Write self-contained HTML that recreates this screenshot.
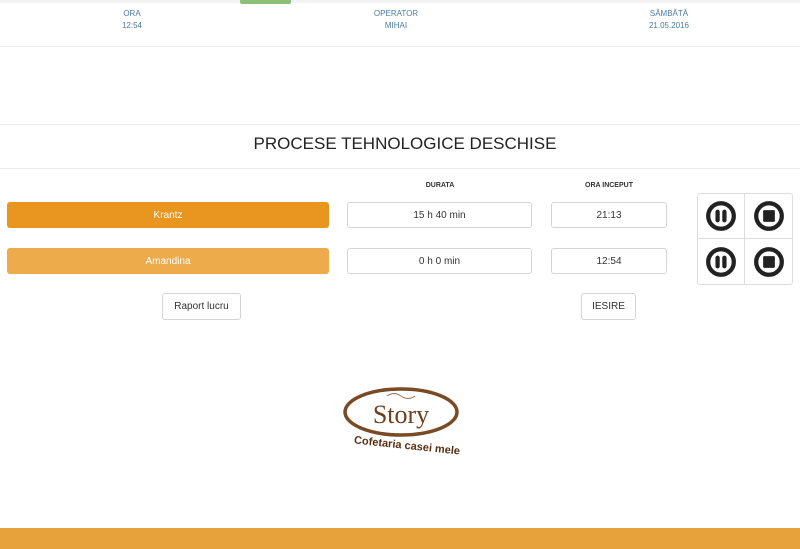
<!DOCTYPE html>
<html><head><meta charset="utf-8"><style>
*{margin:0;padding:0;box-sizing:border-box}
body{width:800px;height:549px;background:#fff;font-family:"Liberation Sans",sans-serif;position:relative;overflow:hidden}
.a{position:absolute}
.hd{font-size:8px;color:#4a7ba8;text-align:center;line-height:12px}
.box{position:absolute;border:1px solid #d5d5d5;border-radius:3px;background:#fff;font-size:10px;color:#333;display:flex;align-items:center;justify-content:center}
.ob{position:absolute;border-radius:3px;color:#fff;font-size:10px;display:flex;align-items:center;justify-content:center}
.cell{position:absolute;border:1px solid #ddd;display:flex;align-items:center;justify-content:center;background:#fff}
</style></head><body>
<div class="a" style="left:0;top:0;width:800px;height:3px;background:#f3f3f3"></div>
<div class="a" style="left:0;top:46px;width:800px;height:1px;background:#f0f0f0"></div>
<div class="a" style="left:240px;top:0;width:51px;height:4px;background:#8cc07a;border-radius:0 0 2px 2px"></div>
<div class="a hd" style="left:100px;top:8px;width:64px">ORA<br>12:54</div>
<div class="a hd" style="left:356px;top:8px;width:80px">OPERATOR<br>MIHAI</div>
<div class="a hd" style="left:629px;top:8px;width:80px">SÂMBĂTĂ<br>21.05.2016</div>
<div class="a" style="left:0;top:124px;width:800px;height:1px;background:#eee"></div>
<div class="a" style="left:0;top:168px;width:800px;height:1px;background:#eee"></div>
<div class="a" style="left:0;top:134px;width:810px;text-align:center;font-size:17px;color:#222">PROCESE TEHNOLOGICE DESCHISE</div>
<div class="a" style="left:400px;top:182px;width:80px;text-align:center;font-size:7px;font-weight:bold;color:#333">DURATA</div>
<div class="a" style="left:569px;top:182px;width:80px;text-align:center;font-size:7px;font-weight:bold;color:#333">ORA INCEPUT</div>
<div class="ob" style="left:7px;top:202px;width:322px;height:26px;background:#e8961f">Krantz</div>
<div class="ob" style="left:7px;top:248px;width:322px;height:26px;background:#eeab4c">Amandina</div>
<div class="box" style="left:347px;top:202px;width:185px;height:26px">15 h 40 min</div>
<div class="box" style="left:347px;top:248px;width:185px;height:26px">0 h 0 min</div>
<div class="box" style="left:551px;top:202px;width:116px;height:26px">21:13</div>
<div class="box" style="left:551px;top:248px;width:116px;height:26px">12:54</div>
<div class="cell" style="left:697px;top:193px;width:48px;height:46px;border-radius:3px 0 0 0"><svg width="32" height="32" viewBox="0 0 30 30"><circle cx="15" cy="15" r="12" fill="none" stroke="#222" stroke-width="4"/><rect x="9.8" y="9" width="4" height="12" rx="2" fill="#222"/><rect x="16.2" y="9" width="4" height="12" rx="2" fill="#222"/></svg></div>
<div class="cell" style="left:744px;top:193px;width:49px;height:46px;border-radius:0 3px 0 0"><svg width="32" height="32" viewBox="0 0 30 30"><circle cx="15" cy="15" r="12" fill="none" stroke="#222" stroke-width="4"/><rect x="9.5" y="9.5" width="11" height="11" rx="1" fill="#222"/></svg></div>
<div class="cell" style="left:697px;top:238px;width:48px;height:47px;border-radius:0 0 0 3px"><svg width="32" height="32" viewBox="0 0 30 30"><circle cx="15" cy="15" r="12" fill="none" stroke="#222" stroke-width="4"/><rect x="9.8" y="9" width="4" height="12" rx="2" fill="#222"/><rect x="16.2" y="9" width="4" height="12" rx="2" fill="#222"/></svg></div>
<div class="cell" style="left:744px;top:238px;width:49px;height:47px;border-radius:0 0 3px 0"><svg width="32" height="32" viewBox="0 0 30 30"><circle cx="15" cy="15" r="12" fill="none" stroke="#222" stroke-width="4"/><rect x="9.5" y="9.5" width="11" height="11" rx="1" fill="#222"/></svg></div>
<div class="box" style="left:162px;top:293px;width:79px;height:27px">Raport lucru</div>
<div class="box" style="left:581px;top:293px;width:55px;height:27px">IESIRE</div>
<svg class="a" style="left:335px;top:384px" width="145" height="76" viewBox="0 0 145 76">
<ellipse cx="66" cy="28" rx="56" ry="23" fill="none" stroke="#7a4a24" stroke-width="3.5"/>
<path d="M52 12 q7-5 14 0 q7 5 14 0" fill="none" stroke="#a07050" stroke-width="1"/>
<text x="66" y="39" text-anchor="middle" font-family="Liberation Serif,serif" font-size="26" fill="#6e3f1d">Story</text>
<text x="72" y="65" text-anchor="middle" font-family="Liberation Sans,sans-serif" font-weight="bold" font-size="11" fill="#5a3115" transform="rotate(6 72 62)">Cofetaria casei mele</text>
</svg>
<div class="a" style="left:0;top:528px;width:800px;height:21px;background:#e8a23c"></div>
</body></html>
